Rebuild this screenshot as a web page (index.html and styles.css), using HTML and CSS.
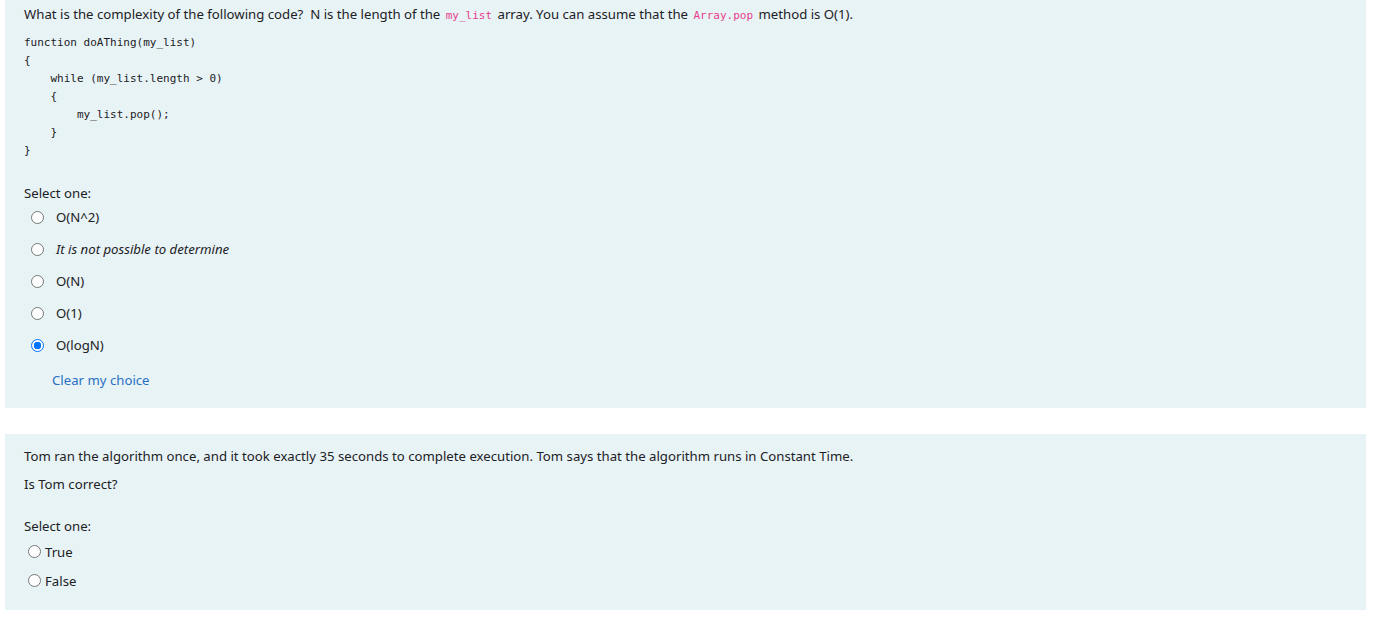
FILE: index.html
```html
<!DOCTYPE html>
<html>
<head>
<meta charset="utf-8">
<link rel="stylesheet" href="styles.css">
</head>
<body>
<div class="que first">
  <p class="qtext">What is the complexity of the following code?&nbsp; N is the length of the <code>my_list</code> array. You can assume that the <code>Array.pop</code> method is O(1).</p>
  <pre class="codeblock">function doAThing(my_list)
{
    while (my_list.length &gt; 0)
    {
        my_list.pop();
    }
}</pre>
  <div class="prompt">Select one:</div>
  <div class="answers wide">
    <label class="opt"><span class="radio"></span><span>O(N^2)</span></label>
    <label class="opt"><span class="radio"></span><span class="ital">It is not possible to determine</span></label>
    <label class="opt"><span class="radio"></span><span>O(N)</span></label>
    <label class="opt"><span class="radio"></span><span>O(1)</span></label>
    <label class="opt"><span class="radio checked"></span><span>O(logN)</span></label>
  </div>
  <a class="clear" href="#">Clear my choice</a>
</div>
<div class="que second">
  <p class="qtext">Tom ran the algorithm once, and it took exactly 35 seconds to complete execution. Tom says that the algorithm runs in Constant Time.</p>
  <p class="qtext q2">Is Tom correct?</p>
  <div class="prompt p2">Select one:</div>
  <div class="answers narrow">
    <label class="opt"><span class="radio"></span><span>True</span></label>
    <label class="opt"><span class="radio"></span><span>False</span></label>
  </div>
</div>
</body>
</html>
```
FILE: styles.css
```css
html, body {
  margin: 0;
  padding: 0;
  background: #ffffff;
}
body {
  font-family: "Noto Sans", "Open Sans", sans-serif;
  font-size: 13.2px;
  line-height: 20px;
  color: #1d2125;
}
.que {
  background: #e7f3f5;
  margin: 0 10px 0 5px;
  padding: 0 19px;
}
.first {
  padding-top: 4px;
  padding-bottom: 18px;
}
.second {
  margin-top: 26px;
  padding-top: 12px;
  padding-bottom: 15px;
}
.qtext {
  margin: 0;
}
.q2 {
  margin-top: 8px;
}
code {
  font-family: "DejaVu Sans Mono", monospace;
  font-size: 11px;
  color: #e83e8c;
  padding: 0 2px;
}
.codeblock {
  margin: 8px 0 0 0;
  font-family: "DejaVu Sans Mono", monospace;
  font-size: 11px;
  line-height: 18px;
  color: #1d2125;
}
.prompt {
  margin-top: 23px;
}
.p2 {
  margin-top: 22px;
}
.answers {
  display: flex;
  flex-direction: column;
}
.opt {
  display: flex;
  align-items: center;
}
.wide {
  margin-top: -2px;
}
.wide .opt {
  height: 32px;
  padding-left: 7px;
  gap: 12px;
}
.narrow {
  margin-top: 1px;
}
.narrow .opt {
  height: 29px;
  padding-left: 4px;
  gap: 4px;
}
.radio {
  width: 11px;
  height: 11px;
  border: 1px solid #767676;
  border-radius: 50%;
  background: #ffffff;
  box-sizing: content-box;
  flex: none;
}
.radio.checked {
  border-color: #0075ff;
  background: radial-gradient(circle, #0075ff 0 3.5px, #ffffff 4px);
}
.ital {
  font-style: italic;
}
.clear {
  display: inline-block;
  margin-top: 9px;
  margin-left: 28px;
  color: #2a6fc4;
  text-decoration: none;
}
```
